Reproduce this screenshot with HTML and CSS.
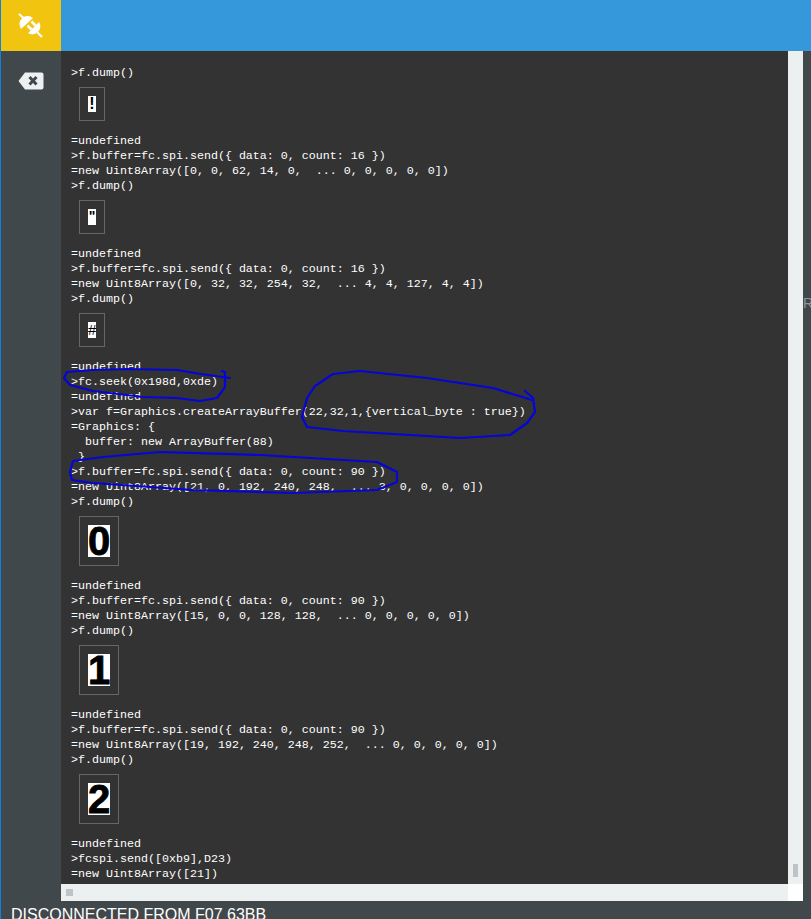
FILE: index.html
```html
<!DOCTYPE html>
<html lang="en">
<head>
<meta charset="utf-8">
<title>Espruino Web IDE</title>
<link rel="stylesheet" href="styles.css">
</head>
<body>
<div class="app">
  <header class="topbar">
    <div class="connect">
      <svg class="plug" viewBox="0 0 36 36" width="36" height="36" aria-hidden="true">
        <path class="plug-line" d="M6 6 L14 13 M24 24 L29 29"/>
        <path class="plug-fill" d="M8 21 A8.2 8.2 0 0 1 20 10 Z"/>
        <path class="plug-fill" d="M15 25 A8 8 0 0 0 26 14 Z"/>
        <path class="plug-prong" d="M18.5 21.5 L14.5 17.5 M22.5 17.5 L18.5 13.5"/>
      </svg>
    </div>
  </header>
  <aside class="sidebar">
    <svg class="erase" viewBox="0 0 26 18" width="26" height="18" aria-hidden="true">
      <path class="erase-body" d="M7 0.5 H23.5 Q25.5 0.5 25.5 2.5 V15.5 Q25.5 17.5 23.5 17.5 H7 L0.5 9 Z"/>
      <path class="erase-x" d="M11.5 5 L18.5 12.5 M18.5 5 L11.5 12.5"/>
    </svg>
  </aside>
  <main class="terminal">
    <div class="output">
      <div class="ln">&gt;f.dump()</div>
      <div class="shot"><div class="fb small">!</div></div>
      <div class="ln">=undefined</div>
      <div class="ln">&gt;f.buffer=fc.spi.send({ data: 0, count: 16 })</div>
      <div class="ln">=new Uint8Array([0, 0, 62, 14, 0,  ... 0, 0, 0, 0, 0])</div>
      <div class="ln">&gt;f.dump()</div>
      <div class="shot"><div class="fb small quote">"</div></div>
      <div class="ln">=undefined</div>
      <div class="ln">&gt;f.buffer=fc.spi.send({ data: 0, count: 16 })</div>
      <div class="ln">=new Uint8Array([0, 32, 32, 254, 32,  ... 4, 4, 127, 4, 4])</div>
      <div class="ln">&gt;f.dump()</div>
      <div class="shot"><div class="fb small hash">#</div></div>
      <div class="ln">=undefined</div>
      <div class="ln">&gt;fc.seek(0x198d,0xde)</div>
      <div class="ln">=undefined</div>
      <div class="ln">&gt;var f=Graphics.createArrayBuffer(22,32,1,{vertical_byte : true})</div>
      <div class="ln">=Graphics: {</div>
      <div class="ln">  buffer: new ArrayBuffer(88)</div>
      <div class="ln"> }</div>
      <div class="ln">&gt;f.buffer=fc.spi.send({ data: 0, count: 90 })</div>
      <div class="ln">=new Uint8Array([21, 0, 192, 240, 248,  ... 3, 0, 0, 0, 0])</div>
      <div class="ln">&gt;f.dump()</div>
      <div class="shot"><div class="fb big">0</div></div>
      <div class="ln">=undefined</div>
      <div class="ln">&gt;f.buffer=fc.spi.send({ data: 0, count: 90 })</div>
      <div class="ln">=new Uint8Array([15, 0, 0, 128, 128,  ... 0, 0, 0, 0, 0])</div>
      <div class="ln">&gt;f.dump()</div>
      <div class="shot"><div class="fb big">1</div></div>
      <div class="ln">=undefined</div>
      <div class="ln">&gt;f.buffer=fc.spi.send({ data: 0, count: 90 })</div>
      <div class="ln">=new Uint8Array([19, 192, 240, 248, 252,  ... 0, 0, 0, 0, 0])</div>
      <div class="ln">&gt;f.dump()</div>
      <div class="shot"><div class="fb big">2</div></div>
      <div class="ln">=undefined</div>
      <div class="ln">&gt;fcspi.send([0xb9],D23)</div>
      <div class="ln">=new Uint8Array([21])</div>
    </div>
    <svg class="scribbles" viewBox="0 0 727 833" width="727" height="833" aria-hidden="true">
      <path d="M169 327 L140 323 L116 319 L66 318 L32 319 L6 321 L3 327 L9 334 L32 340 L82 346 L116 347 L139 350 L156 347 L164 336 L164 321 L161 320"/>
      <path d="M464 340 L472 347 L474 361 L466 372 L449 384 L399 387 L332 383 L282 380 L246 376 L241 366 L246 347 L254 335 L272 323 L299 320 L366 327 L432 337 L471 349"/>
      <path d="M12 410 L42 406 L99 401 L199 404 L316 411 L336 421 L336 431 L316 439 L232 442 L132 439 L32 432 L11 429 L9 421 L12 410"/>
    </svg>
    <div class="scroll-v"><span class="thumb-v"></span></div>
    <div class="scroll-h"><span class="thumb-h"></span></div>
    <div class="corner"></div>
  </main>
  <div class="edge"><span class="edge-label">R</span></div>
  <footer class="status">DISCONNECTED FROM F07 63BB</footer>
</div>
</body>
</html>
```
FILE: styles.css
```css
html, body {
  margin: 0;
  padding: 0;
  height: 100%;
  overflow: hidden;
  background: #41484b;
}
.app {
  width: 811px;
  height: 919px;
  box-sizing: border-box;
  border-left: 1px solid #0f7fe0;
  display: grid;
  grid-template-columns: 60px 742px 8px;
  grid-template-rows: 51px 850px 18px;
  overflow: hidden;
  font-family: "Liberation Sans", Arial, sans-serif;
}
.topbar {
  grid-column: 1 / 4;
  background: #3498db;
  display: flex;
}
.connect {
  width: 60px;
  background: #f1c40f;
  display: flex;
  align-items: center;
  justify-content: center;
}
.plug-fill { fill: #fff; }
.plug-line { stroke: #fff; stroke-width: 2.2; fill: none; }
.plug-prong { stroke: #fff; stroke-width: 2.6; fill: none; }
.sidebar {
  background: #41484b;
  display: flex;
  justify-content: center;
  align-items: flex-start;
  padding: 21px 1px 0 0;
  box-sizing: border-box;
}
.erase-body { fill: #ecf0f1; }
.erase-x { stroke: #41484b; stroke-width: 3; fill: none; }
.terminal {
  position: relative;
  background: #333;
  display: grid;
  grid-template-columns: 727px 15px;
  grid-template-rows: 833px 17px;
  min-height: 0;
}
.output {
  grid-column: 1;
  grid-row: 1;
  padding: 15px 0 0 10px;
  overflow: hidden;
  color: #fff;
  font-family: "Liberation Mono", "Courier New", monospace;
  font-size: 11.67px;
  line-height: 15px;
}
.ln {
  height: 15px;
  white-space: pre;
}
.shot {
  width: max-content;
  margin: 6px 0 13px 8px;
  padding: 8px;
  border: 1px solid #666;
}
.fb {
  background: #fff;
  color: #000;
  font-family: "Liberation Sans", Arial, sans-serif;
  font-weight: bold;
  text-align: center;
}
.small {
  width: 8px;
  height: 16px;
  font-size: 16px;
  line-height: 16px;
}
.quote {
  font-size: 14px;
  line-height: 14px;
}
.hash {
  font-size: 15px;
  font-weight: normal;
}
.big {
  width: 22px;
  height: 32px;
  font-size: 40px;
  line-height: 32px;
  -webkit-text-stroke: 0.8px #000;
}
.scribbles {
  position: absolute;
  left: 0;
  top: 0;
  pointer-events: none;
}
.scribbles path {
  fill: none;
  stroke: #0505d8;
  stroke-width: 2.2;
  stroke-linejoin: round;
  stroke-linecap: round;
}
.scroll-v {
  grid-column: 2;
  grid-row: 1;
  background: #ecf0f1;
  display: flex;
  align-items: flex-end;
  justify-content: center;
  padding-bottom: 7px;
  box-sizing: border-box;
}
.thumb-v {
  width: 5px;
  height: 13px;
  background: #bdc3c7;
}
.scroll-h {
  grid-column: 1;
  grid-row: 2;
  background: #ecf0f1;
  display: flex;
  align-items: center;
  padding-left: 5px;
}
.thumb-h {
  width: 7px;
  height: 7px;
  background: #bdc3c7;
}
.corner {
  grid-column: 2;
  grid-row: 2;
  background: #fff;
}
.edge {
  background: #41484b;
  overflow: hidden;
  padding-top: 244px;
  box-sizing: border-box;
}
.edge-label {
  display: block;
  color: #8f9496;
  font-size: 14px;
  line-height: 16px;
}
.status {
  grid-column: 1 / 4;
  background: #41484b;
  color: #fff;
  font-size: 16px;
  line-height: 20px;
  padding: 4px 0 0 10px;
  white-space: nowrap;
  overflow: hidden;
}
```
